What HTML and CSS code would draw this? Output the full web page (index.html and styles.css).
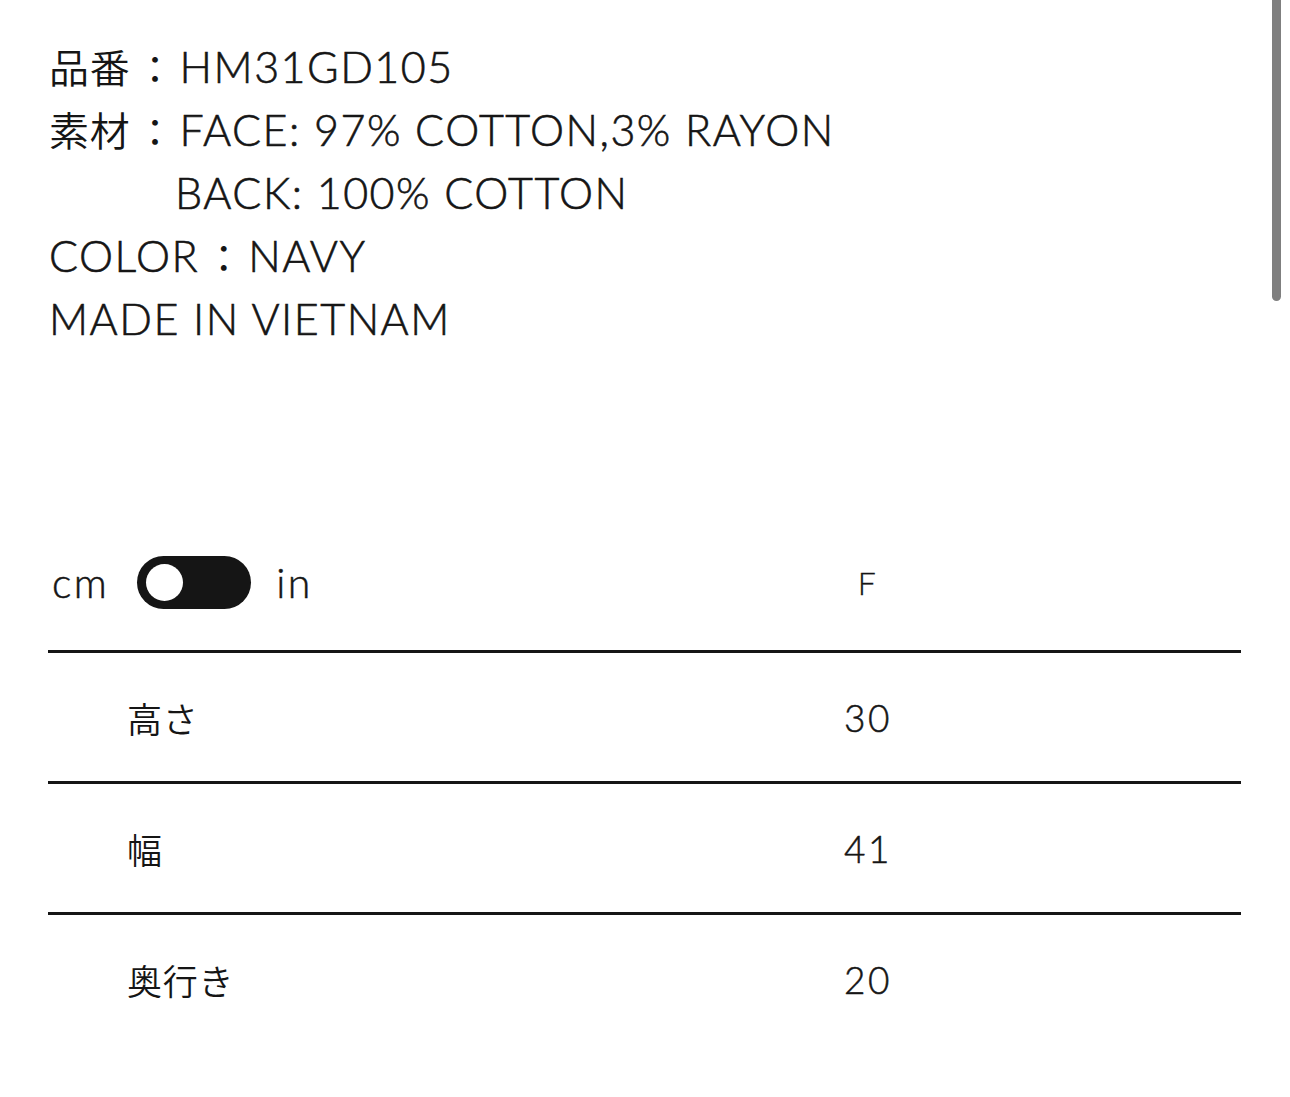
FILE: index.html
```html
<!DOCTYPE html>
<html lang="ja">
<head>
<meta charset="utf-8">
<title>Product spec</title>
<link rel="stylesheet" href="styles.css">
</head>
<body>
<div class="page">
  <div class="spec">
    <div class="line"><span class="ja">品番</span><span class="colon">：</span>HM31GD105</div>
    <div class="line"><span class="ja">素材</span><span class="colon">：</span>FACE: 97% COTTON,3% RAYON</div>
    <div class="line indent">BACK: 100% COTTON</div>
    <div class="line">COLOR<span class="colon">：</span>NAVY</div>
    <div class="line">MADE IN VIETNAM</div>
  </div>

  <div class="size-table">
    <div class="head">
      <div class="unit">
        <span class="unit-label">cm</span>
        <span class="toggle"><span class="knob"></span></span>
        <span class="unit-label">in</span>
      </div>
      <div class="val">F</div>
    </div>
    <div class="row">
      <div class="label">高さ</div>
      <div class="val">30</div>
    </div>
    <div class="row">
      <div class="label">幅</div>
      <div class="val">41</div>
    </div>
    <div class="row">
      <div class="label">奥行き</div>
      <div class="val">20</div>
    </div>
  </div>
</div>
<div class="scrollbar"></div>
</body>
</html>
```
FILE: styles.css
```css
html, body {
  margin: 0;
  padding: 0;
  background: #fff;
}
body {
  font-family: "Lato", "Noto Sans CJK JP", sans-serif;
  font-weight: 300;
  color: #151515;
  width: 1290px;
  height: 1097px;
  overflow: hidden;
}
.page {
  padding: 35px 0 0 49px;
}
.spec {
  font-size: 43px;
  letter-spacing: 0.035em;
  -webkit-text-stroke: 0.6px #151515;
}
.line {
  height: 63px;
  line-height: 63px;
  white-space: nowrap;
}
.ja {
  font-size: 40px;
  font-weight: 350;
  letter-spacing: 0.02em;
  -webkit-text-stroke: 0;
}
.colon {
  display: inline-block;
  font-size: 38px;
  font-weight: 400;
  width: 49px;
  text-align: center;
  letter-spacing: 0;
  -webkit-text-stroke: 0;
}
.indent {
  padding-left: 126px;
}
.size-table {
  margin-top: 164px;
  width: 1193px;
  margin-left: -1px;
}
.head {
  display: flex;
  align-items: center;
  height: 136px;
  border-bottom: 3px solid #151515;
}
.unit {
  display: flex;
  align-items: center;
  width: 778px;
  padding-left: 4px;
  box-sizing: border-box;
}
.unit-label {
  font-size: 41px;
  letter-spacing: 0.06em;
  -webkit-text-stroke: 0.5px #151515;
}
.toggle {
  width: 114px;
  height: 53px;
  border-radius: 27px;
  background: #151515;
  margin: 0 25px 0 28px;
  display: flex;
  align-items: center;
  padding-left: 9px;
  box-sizing: border-box;
}
.knob {
  width: 37px;
  height: 37px;
  border-radius: 50%;
  background: #fff;
}
.val {
  width: 84px;
  text-align: center;
  font-size: 37px;
  letter-spacing: 0.07em;
  -webkit-text-stroke: 0.5px #151515;
}
.head .val {
  font-size: 32px;
  -webkit-text-stroke: 0.3px #151515;
}
.row {
  display: flex;
  align-items: center;
  height: 128px;
  border-bottom: 3px solid #151515;
}
.row:last-child {
  border-bottom: none;
}
.label {
  width: 778px;
  padding-left: 79px;
  box-sizing: border-box;
  font-size: 35px;
  font-weight: 350;
  letter-spacing: 0.02em;
}
.scrollbar {
  position: fixed;
  top: 0;
  left: 1272px;
  width: 9px;
  height: 301px;
  background: #7f7f7f;
  border-radius: 0 0 5px 5px;
}
```
